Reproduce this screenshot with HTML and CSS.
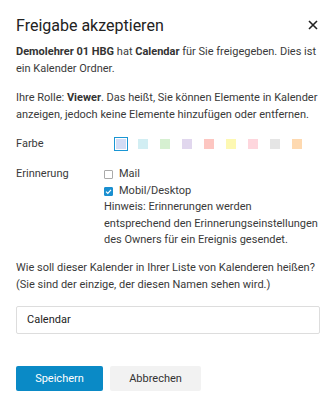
FILE: index.html
```html
<html lang="de">

<head>
    <meta charset="UTF-8">
    <meta name="viewport" content="width=device-width, initial-scale=1.0">
    <title>Freigabe akzeptieren</title>
    <link rel="stylesheet" href="styles.css">
</head>

<body>
    <div class="dialog">
        <div class="header">
            <h2>Freigabe akzeptieren</h2>
            <span class="close">
                <svg width="10" height="10" viewBox="0 0 10 10">
                    <path d="M1 1 L9 9 M9 1 L1 9" stroke="#222" stroke-width="1.6" fill="none" />
                </svg>
            </span>
        </div>

        <p class="text intro"><b>Demolehrer 01 HBG</b> hat <b>Calendar</b> für Sie freigegeben. Dies ist ein Kalender Ordner.</p>
        <p class="text role">Ihre Rolle: <b>Viewer</b>. Das heißt, Sie können Elemente in Kalender anzeigen, jedoch keine Elemente hinzufügen oder entfernen.</p>

        <div class="row row-color">
            <div class="label">Farbe</div>
            <div class="swatches">
                <span class="swatch selected" style="background-color: #d3dcf5;"></span>
                <span class="swatch" style="background-color: #d2eef3;"></span>
                <span class="swatch" style="background-color: #d6f0d1;"></span>
                <span class="swatch" style="background-color: #e1d7ee;"></span>
                <span class="swatch" style="background-color: #fdc6c1;"></span>
                <span class="swatch" style="background-color: #fdf8b2;"></span>
                <span class="swatch" style="background-color: #fed6dd;"></span>
                <span class="swatch" style="background-color: #e5e5e5;"></span>
                <span class="swatch" style="background-color: #fed9b0;"></span>
            </div>
        </div>

        <div class="row row-reminder">
            <div class="label">Erinnerung</div>
            <div class="options">
                <label class="check"><span class="box"></span>Mail</label>
                <label class="check"><span class="box checked">
                    <svg width="7" height="7" viewBox="0 0 7 7">
                        <path d="M1 3.6 L2.8 5.3 L6 1.8" stroke="#fff" stroke-width="1.2" fill="none" />
                    </svg>
                </span>Mobil/Desktop</label>
                <div class="hint">Hinweis: Erinnerungen werden<br>entsprechend den Erinnerungseinstellungen<br>des Owners für ein Ereignis gesendet.</div>
            </div>
        </div>

        <p class="text question">Wie soll dieser Kalender in Ihrer Liste von Kalenderen heißen? (Sie sind der einzige, der diesen Namen sehen wird.)</p>

        <div class="name-input">Calendar</div>

        <div class="buttons">
            <button class="btn btn-primary">Speichern</button>
            <button class="btn btn-secondary">Abbrechen</button>
        </div>
    </div>
</body>

</html>
```

FILE: styles.css
```css
body {
    margin: 0;
    background-color: white;
    font-family: Roboto, "Liberation Sans", sans-serif;
    color: #3a3a3a;
}

.dialog {
    padding: 12px 16px;
}

.header {
    display: flex;
    justify-content: space-between;
    align-items: center;
    height: 26px;
}

.header>h2 {
    margin: 0;
    font-size: 16px;
    font-weight: 400;
    color: #222;
}

.close {
    display: flex;
    margin-right: 2px;
}

.text {
    font-size: 11px;
    line-height: 16.5px;
    margin: 0;
}

.text b {
    font-weight: 700;
    color: #333;
}

.intro {
    margin-top: 6px;
}

.role {
    margin-top: 13px;
}

.row {
    display: flex;
    font-size: 11px;
    line-height: 16.4px;
}

.label {
    width: 88px;
}

.row-color {
    margin-top: 13px;
    align-items: center;
}

.swatches {
    display: flex;
    gap: 12px;
    padding-left: 12px;
}

.swatch {
    width: 10px;
    height: 10px;
    display: block;
}

.swatch.selected {
    outline: 1px solid #1a96d4;
    outline-offset: 1px;
}

.row-reminder {
    margin-top: 14px;
}

.options {
    display: flex;
    flex-direction: column;
}

.check {
    display: flex;
    align-items: center;
}

.box {
    width: 7px;
    height: 7px;
    border: 1px solid #aaa;
    border-radius: 1px;
    margin-right: 6px;
    display: flex;
    align-items: center;
    justify-content: center;
}

.box.checked {
    background-color: #1a8fd0;
    border-color: #1a8fd0;
}

.question {
    margin-top: 12px;
}

.name-input {
    border: 1px solid #ddd;
    border-radius: 2px;
    height: 26px;
    line-height: 26px;
    padding: 0 10px;
    font-size: 11px;
    color: #222;
    margin-top: 13px;
}

.buttons {
    display: flex;
    gap: 7px;
    margin-top: 32px;
}

.btn {
    font-family: Roboto, "Liberation Sans", sans-serif;
    font-size: 11px;
    height: 25px;
    border: none;
    border-radius: 2px;
    cursor: pointer;
}

.btn-primary {
    background-color: #0a8ac6;
    color: white;
    width: 87px;
}

.btn-secondary {
    background-color: #f2f2f2;
    color: #333;
    width: 91px;
}
```
